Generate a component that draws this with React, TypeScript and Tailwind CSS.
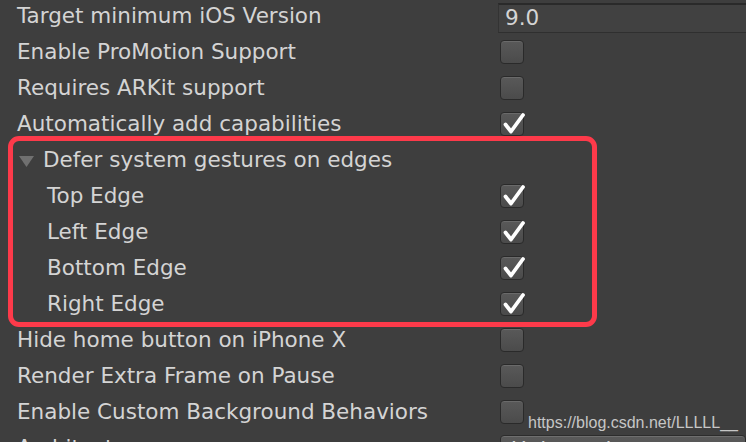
import React from 'react';

function Check({ on }: { on?: boolean }) {
  return (
    <div className="relative w-[24px] h-[24px] rounded-[4px] border border-[#2a2a2a] bg-gradient-to-b from-[#595959] to-[#4b4b4b] shadow-[inset_0_1px_0_#6a6a6a]">
      {on && (
        <svg className="absolute left-0 top-0 overflow-visible" width="24" height="24" viewBox="0 0 24 24">
          <path d="M4.5 11.5 L10 18.5 L22 2" fill="none" stroke="#ffffff" strokeWidth="3.8" strokeLinecap="round" strokeLinejoin="round" />
        </svg>
      )}
    </div>
  );
}

function Row({ label, indent = 17, children }: { label: React.ReactNode; indent?: number; children?: React.ReactNode }) {
  return (
    <div className="flex h-[36px] items-center">
      <div className="w-[500px] shrink-0 flex items-center whitespace-nowrap" style={{ paddingLeft: indent }}>
        {label}
      </div>
      {children}
    </div>
  );
}

export default function App() {
  return (
    <div className="w-[746px] h-[442px] overflow-hidden bg-[#3e3e3e] text-[#d4d4d4] text-[21.5px] font-['DejaVu_Sans',sans-serif]">
      <div className="-mt-[2px]">
        {/* text field row */}
        <div className="flex h-[36px] items-center">
          <div className="w-[498px] shrink-0 pl-[17px]">Target minimum iOS Version</div>
          <div className="flex-1 h-[30px] mt-[4px] border-t-2 border-l border-b border-t-[#2a2a2a] border-l-[#333] border-b-[#2f2f2f] bg-[#414141] pl-[6px] flex items-center">
            9.0
          </div>
        </div>
        <Row label="Enable ProMotion Support"><Check /></Row>
        <Row label="Requires ARKit support"><Check /></Row>
        <Row label="Automatically add capabilities"><Check on /></Row>

        {/* foldout group with annotation */}
        <div className="relative">
          <Row
            indent={19}
            label={
              <>
                <svg width="15" height="11" viewBox="0 0 15 11" className="mr-[9px] mt-[2px]">
                  <path d="M0 0 H15 L7.5 11 Z" fill="#707070" />
                </svg>
                Defer system gestures on edges
              </>
            }
          />
          <Row indent={47} label="Top Edge"><Check on /></Row>
          <Row indent={47} label="Left Edge"><Check on /></Row>
          <Row indent={47} label="Bottom Edge"><Check on /></Row>
          <Row indent={47} label="Right Edge"><Check on /></Row>
          <div className="absolute left-[8px] w-[589px] -top-[6px] -bottom-[5px] border-[5px] border-[#fd3a4a] rounded-[11px] pointer-events-none" />
        </div>

        <Row label="Hide home button on iPhone X"><Check /></Row>
        <Row label="Render Extra Frame on Pause"><Check /></Row>
        <Row label="Enable Custom Background Behaviors">
          <Check />
          <span className="self-end mb-[-5px] ml-[4px] text-[16px] text-[#c6c6c6] font-['Liberation_Sans',sans-serif]">
            https://blog.csdn.net/LLLLL__
          </span>
        </Row>
        <div className="flex h-[36px] items-center">
          <div className="w-[500px] shrink-0 pl-[17px]">Architecture</div>
          <div className="flex-1 h-[30px] mt-[4px] rounded-[4px] border border-[#2c2c2c] bg-gradient-to-b from-[#5a5a5a] to-[#4e4e4e] shadow-[inset_0_1px_0_#6e6e6e] pl-[10px] flex items-center">
            Universal
          </div>
        </div>
      </div>
    </div>
  );
}
